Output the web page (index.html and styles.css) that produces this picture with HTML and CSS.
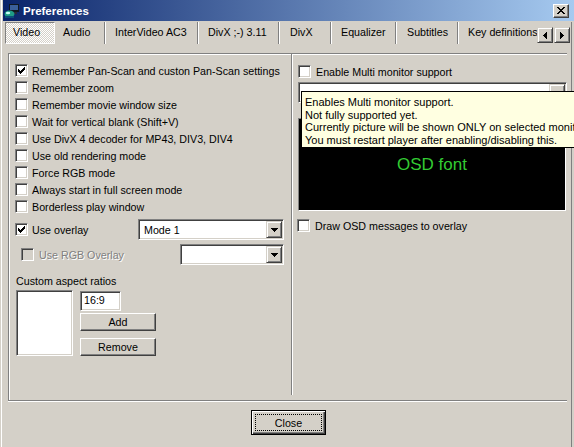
FILE: index.html
```html
<!DOCTYPE html>
<html>
<head>
<meta charset="utf-8">
<title>Preferences</title>
<link rel="stylesheet" href="styles.css">
</head>
<body>
<div class="window">
  <div class="titlebar">
    <svg class="app-icon" viewBox="0 0 16 16">
      <rect x="5" y="1" width="10" height="8" fill="#101820"/>
      <rect x="6" y="2" width="8" height="5" fill="#3a5f9a"/>
      <rect x="8" y="9" width="5" height="2" fill="#2a2a3a"/>
      <ellipse cx="5.5" cy="11" rx="5" ry="3.5" fill="#1f9c86"/>
      <ellipse cx="4" cy="10" rx="2.2" ry="1.3" fill="#c8fff4"/>
      <rect x="1" y="13" width="9" height="2" fill="#0d4f7a"/>
    </svg>
    <span class="title">Preferences</span>
    <span class="cap-btn"><svg viewBox="0 0 8 7"><path d="M0 0h2v1H0zM6 0h2v1H6zM1 1h2v1H1zM5 1h2v1H5zM2 2h4v1H2zM3 3h2v1H3zM2 4h4v1H2zM1 5h2v1H1zM5 5h2v1H5zM0 6h2v1H0zM6 6h2v1H6z" fill="#000"/></svg></span>
  </div>
  <div class="client">
    <div class="tabstrip">
      <div class="tablist">
        <div class="tab active w-video">Video</div>
        <div class="tab w-audio">Audio</div>
        <div class="sep"></div>
        <div class="tab w-inter">InterVideo AC3</div>
        <div class="sep"></div>
        <div class="tab w-divx311">DivX ;-) 3.11</div>
        <div class="sep"></div>
        <div class="tab w-divx">DivX</div>
        <div class="sep"></div>
        <div class="tab w-eq">Equalizer</div>
        <div class="sep"></div>
        <div class="tab w-subs">Subtitles</div>
        <div class="sep"></div>
        <div class="tab w-keys">Key definitions</div>
      </div>
      <div class="scroller">
        <span class="sbtn"><svg viewBox="0 0 4 7" class="tri-h"><path d="M4 0v7H3V6H2V5H1V4H0V3h1V2h1V1h1V0z" fill="#000"/></svg></span>
        <span class="sbtn"><svg viewBox="0 0 4 7" class="tri-h"><path d="M0 0v7h1V6h1V5h1V4h1V3H3V2H2V1H1V0z" fill="#000"/></svg></span>
      </div>
    </div>

    <div class="page">
      <div class="col-left">
        <div class="row"><span class="cb"><svg viewBox="0 0 11 11"><path d="M2 4h1v3H2zM3 5h1v3H3zM4 6h1v3H4zM5 5h1v3H5zM6 4h1v3H6zM7 3h1v3H7zM8 2h1v3H8z" fill="#000"/></svg></span><span>Remember Pan-Scan and custon Pan-Scan settings</span></div>
        <div class="row"><span class="cb"></span><span>Remember zoom</span></div>
        <div class="row"><span class="cb"></span><span>Remember movie window size</span></div>
        <div class="row"><span class="cb"></span><span>Wait for vertical blank (Shift+V)</span></div>
        <div class="row"><span class="cb"></span><span>Use DivX 4 decoder for MP43, DIV3, DIV4</span></div>
        <div class="row"><span class="cb"></span><span>Use old rendering mode</span></div>
        <div class="row"><span class="cb"></span><span>Force RGB mode</span></div>
        <div class="row"><span class="cb"></span><span>Always start in full screen mode</span></div>
        <div class="row"><span class="cb"></span><span>Borderless play window</span></div>
        <div class="row tall"><span class="cb"><svg viewBox="0 0 11 11"><path d="M2 4h1v3H2zM3 5h1v3H3zM4 6h1v3H4zM5 5h1v3H5zM6 4h1v3H6zM7 3h1v3H7zM8 2h1v3H8z" fill="#000"/></svg></span><span>Use overlay</span>
          <div class="combo mode"><span class="combo-text">Mode 1</span><span class="drop"><svg viewBox="0 0 7 4" class="tri-v"><path d="M0 0h7v1H6v1H5v1H4v1H3V3H2V2H1V1H0z" fill="#000"/></svg></span></div>
        </div>
        <div class="row tall indent"><span class="cb disabled"></span><span class="disabled-text">Use RGB Overlay</span>
          <div class="combo rgb"><span class="combo-text"></span><span class="drop"><svg viewBox="0 0 7 4" class="tri-v"><path d="M0 0h7v1H6v1H5v1H4v1H3V3H2V2H1V1H0z" fill="#000"/></svg></span></div>
        </div>
        <div class="aspect-label">Custom aspect ratios</div>
        <div class="aspect">
          <div class="listbox"></div>
          <div class="aspect-ctrls">
            <div class="edit">16:9</div>
            <button class="btn add">Add</button>
            <button class="btn remove">Remove</button>
          </div>
        </div>
      </div>
      <div class="divider"></div>
      <div class="col-right">
        <div class="row"><span class="cb"></span><span>Enable Multi monitor support</span></div>
        <div class="combo monitor"><span class="combo-text"></span><span class="drop"><svg viewBox="0 0 7 4" class="tri-v"><path d="M0 0h7v1H6v1H5v1H4v1H3V3H2V2H1V1H0z" fill="#808080"/></svg></span></div>
        <div class="osd">OSD font</div>
        <div class="row draw"><span class="cb"></span><span>Draw OSD messages to overlay</span></div>
      </div>
    </div>

    <div class="footer">
      <button class="btn default"><span class="focus">Close</span></button>
    </div>
  </div>

  <div class="tooltip">
    <div>Enables Multi monitor support.</div>
    <div>Not fully supported yet.</div>
    <div>Currently picture will be shown ONLY on selected monitor.</div>
    <div>You must restart player after enabling/disabling this.</div>
  </div>
</div>
</body>
</html>
```

FILE: styles.css
```css
* { box-sizing: border-box; }
html, body { margin: 0; padding: 0; background: #d4d0c8; }
body {
  font-family: "Liberation Sans", Arial, sans-serif;
  font-size: 10.7px;
  color: #000;
}
button { font: inherit; color: inherit; margin: 0; padding: 0; }

.window {
  position: relative;
  width: 574px;
  height: 447px;
  overflow: hidden;
  background: #d4d0c8;
  box-shadow: inset 1px 0 0 #d4d0c8, inset 2px 0 0 #fff;
}

/* title bar */
.titlebar {
  display: flex;
  align-items: center;
  height: 21px;
  margin-left: 3px;
  background: linear-gradient(to right, #0a246a, #a6caf0);
  color: #fff;
}
.app-icon { display: block; width: 16px; height: 16px; margin-left: 1px; }
.title { margin-left: 3px; font-weight: bold; font-size: 11.5px; }
.cap-btn {
  margin-left: auto;
  margin-right: 5px;
  width: 16px;
  height: 14px;
  display: flex;
  align-items: center;
  justify-content: center;
  background: #d4d0c8;
  border: 1px solid;
  border-color: #fff #404040 #404040 #fff;
  box-shadow: inset -1px -1px 0 #808080;
}
.cap-btn svg { display: block; width: 8px; height: 7px; shape-rendering: crispEdges; }

.client {
  height: 426px;
  box-shadow: inset -2px 0 0 #d4d0c8, inset -3px 0 0 #808080;
}

/* tabs */
.tabstrip { display: flex; height: 22px; margin-top: 1px; padding-left: 5px; }
.tablist { display: flex; flex: 0 0 532px; overflow: hidden; white-space: nowrap; }
.tab { flex: none; height: 22px; line-height: 21px; }
.tab.active {
  border: 1px solid;
  border-color: #808080 #fff #fff #808080;
  background: repeating-conic-gradient(#fff 0 25%, #d4d0c8 0 50%) 0 0 / 2px 2px;
  padding-left: 7px;
  line-height: 19px;
}
.sep { flex: none; width: 2px; height: 22px; border-left: 1px solid #808080; border-right: 1px solid #fff; }
.w-video { width: 50px; }
.w-audio { width: 49px; padding-left: 8px; }
.w-inter { width: 91px; padding-left: 9px; }
.w-divx311 { width: 79px; padding-left: 9px; }
.w-divx { width: 50px; padding-left: 10px; }
.w-eq { width: 63px; padding-left: 9px; }
.w-subs { width: 60px; padding-left: 10px; }
.w-keys { width: 90px; padding-left: 9px; }

.scroller { display: flex; gap: 1px; align-self: flex-end; margin-bottom: 1px; }
.sbtn {
  width: 16px;
  height: 16px;
  display: flex;
  align-items: center;
  justify-content: center;
  background: #d4d0c8;
  border: 1px solid;
  border-color: #d4d0c8 #404040 #404040 #d4d0c8;
  box-shadow: inset 1px 1px 0 #fff, inset -1px -1px 0 #808080;
}
.tri-h { display: block; width: 4px; height: 7px; shape-rendering: crispEdges; }
.tri-v { display: block; width: 7px; height: 4px; shape-rendering: crispEdges; }

/* page frame */
.page {
  display: flex;
  margin: 9px 0 0 8px;
  width: 559px;
  height: 348px;
  border-top: 1px solid #808080;
  border-left: 1px solid #808080;
  border-bottom: 1px solid #808080;
  box-shadow: inset 1px 1px 0 #fff, 0 1px 0 #fff;
}
.col-left { width: 282px; flex: none; padding: 8px 7px 0 6px; }
.divider { flex: none; width: 2px; height: 341px; border-left: 1px solid #808080; border-right: 1px solid #fff; }
.col-right { flex: 1; padding: 9px 0 0 5px; }

.row { display: flex; align-items: center; height: 17px; white-space: nowrap; }
.row.tall { height: 21px; margin-top: 4px; }
.row.indent { padding-left: 6px; }
.row.indent .cb { margin-right: 5px; }

.cb {
  flex: none;
  width: 13px;
  height: 13px;
  margin-right: 4px;
  border: 1px solid;
  border-color: #808080 #fff #fff #808080;
  box-shadow: inset 1px 1px 0 #404040, inset -1px -1px 0 #d4d0c8;
  background: #fff;
}
.cb svg { display: block; width: 11px; height: 11px; shape-rendering: crispEdges; }
.cb.disabled { background: #d4d0c8; }
.disabled-text { color: #808080; text-shadow: 1px 1px 0 #fff; }

.col-right .cb { margin-right: 5px; }

/* sunken fields */
.combo, .edit, .listbox, .osd {
  border: 1px solid;
  border-color: #808080 #fff #fff #808080;
}
.combo, .edit, .listbox {
  box-shadow: inset 1px 1px 0 #404040, inset -1px -1px 0 #d4d0c8;
  background: #fff;
}
.combo { display: flex; align-items: center; height: 21px; padding: 1px; }
.combo.mode { width: 146px; margin-left: auto; }
.combo.rgb { width: 104px; margin-left: auto; }
.combo.monitor { width: 269px; margin-top: 2px; }
.combo-text { flex: 1; padding-left: 4px; }
.drop {
  flex: none;
  width: 16px;
  height: 17px;
  display: flex;
  align-items: center;
  justify-content: center;
  background: #d4d0c8;
  border: 1px solid;
  border-color: #d4d0c8 #404040 #404040 #d4d0c8;
  box-shadow: inset 1px 1px 0 #fff, inset -1px -1px 0 #808080;
}

.aspect-label { margin: 10px 0 0 1px; height: 13px; line-height: 13px; }
.aspect { display: flex; margin: 2px 0 0 1px; }
.listbox { width: 57px; height: 66px; flex: none; }
.aspect-ctrls { margin-left: 7px; display: flex; flex-direction: column; align-items: flex-start; }
.edit { width: 41px; height: 20px; margin-top: 1px; padding-left: 3px; line-height: 17px; }

.btn {
  display: flex;
  align-items: center;
  justify-content: center;
  background: #d4d0c8;
  border: 1px solid;
  border-color: #fff #404040 #404040 #fff;
  box-shadow: inset -1px -1px 0 #808080;
}
.btn.add { width: 76px; height: 18px; margin-top: 2px; }
.btn.remove { width: 76px; height: 18px; margin-top: 7px; }

.osd {
  width: 268px;
  height: 93px;
  margin-top: 15px;
  background: #000;
  color: #33cc33;
  font-size: 17px;
  display: flex;
  align-items: center;
  justify-content: center;
}
.row.draw { margin-top: 6px; margin-left: -1px; }

/* footer */
.footer { padding: 9px 0 0 251px; }
.btn.default {
  width: 75px;
  height: 25px;
  border: 1px solid #000;
  box-shadow: inset 1px 1px 0 #fff, inset -1px -1px 0 #404040, inset -2px -2px 0 #808080;
  padding: 3px;
}
.focus {
  flex: 1;
  align-self: stretch;
  display: flex;
  align-items: center;
  justify-content: center;
  border: 1px dotted #000;
}

/* tooltip */
.tooltip {
  position: absolute;
  left: 301px;
  top: 91px;
  width: 290px;
  border: 1px solid #000;
  background: #ffffe1;
  padding: 4px 4px 1px 3px;
  font-size: 11px;
  line-height: 12.5px;
  white-space: nowrap;
}
```
